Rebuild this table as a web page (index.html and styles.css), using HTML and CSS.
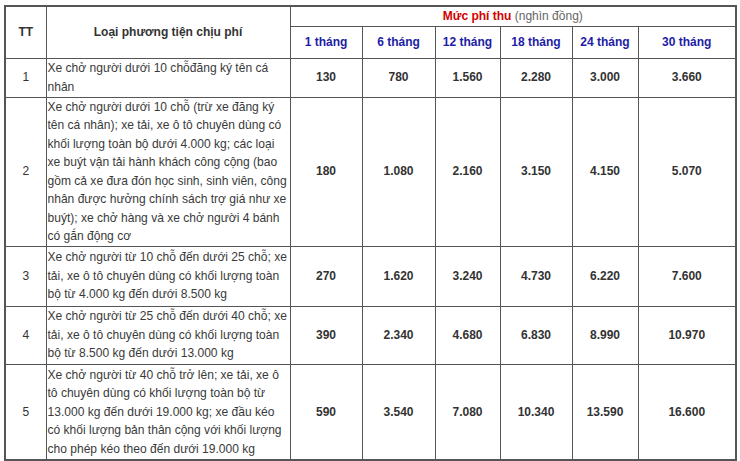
FILE: index.html
```html
<!DOCTYPE html>
<html lang="vi">
<head>
<meta charset="utf-8">
<link rel="stylesheet" href="styles.css">
</head>
<body>
<table class="fee">
  <colgroup>
    <col class="c-tt"><col class="c-name"><col class="c-1"><col class="c-6"><col class="c-12"><col class="c-18"><col class="c-24"><col class="c-30">
  </colgroup>
  <thead>
    <tr class="h1">
      <th rowspan="2" class="hd">TT</th>
      <th rowspan="2" class="hd">Loại phương tiện chịu phí</th>
      <th colspan="6" class="group"><span class="red">Mức phí thu</span> <span class="unit">(nghìn đồng)</span></th>
    </tr>
    <tr class="h2">
      <th class="m">1 tháng</th>
      <th class="m">6 tháng</th>
      <th class="m">12 tháng</th>
      <th class="m">18 tháng</th>
      <th class="m">24 tháng</th>
      <th class="m">30 tháng</th>
    </tr>
  </thead>
  <tbody>
    <tr class="r1">
      <td class="tt">1</td>
      <td class="desc">Xe chở người dưới 10 chỗđăng ký tên cá<br>nhân</td>
      <td class="n">130</td><td class="n">780</td><td class="n">1.560</td><td class="n">2.280</td><td class="n">3.000</td><td class="n">3.660</td>
    </tr>
    <tr class="r2">
      <td class="tt">2</td>
      <td class="desc">Xe chở người dưới 10 chỗ (trừ xe đăng ký<br>tên cá nhân); xe tải, xe ô tô chuyên dùng có<br>khối lượng toàn bộ dưới 4.000 kg; các loại<br>xe buýt vận tải hành khách công cộng (bao<br>gồm cả xe đưa đón học sinh, sinh viên, công<br>nhân được hưởng chính sách trợ giá như xe<br>buýt); xe chở hàng và xe chở người 4 bánh<br>có gắn động cơ</td>
      <td class="n">180</td><td class="n">1.080</td><td class="n">2.160</td><td class="n">3.150</td><td class="n">4.150</td><td class="n">5.070</td>
    </tr>
    <tr class="r3">
      <td class="tt">3</td>
      <td class="desc">Xe chở người từ 10 chỗ đến dưới 25 chỗ; xe<br>tải, xe ô tô chuyên dùng có khối lượng toàn<br>bộ từ 4.000 kg đến dưới 8.500 kg</td>
      <td class="n">270</td><td class="n">1.620</td><td class="n">3.240</td><td class="n">4.730</td><td class="n">6.220</td><td class="n">7.600</td>
    </tr>
    <tr class="r4">
      <td class="tt">4</td>
      <td class="desc">Xe chở người từ 25 chỗ đến dưới 40 chỗ; xe<br>tải, xe ô tô chuyên dùng có khối lượng toàn<br>bộ từ 8.500 kg đến dưới 13.000 kg</td>
      <td class="n">390</td><td class="n">2.340</td><td class="n">4.680</td><td class="n">6.830</td><td class="n">8.990</td><td class="n">10.970</td>
    </tr>
    <tr class="r5">
      <td class="tt">5</td>
      <td class="desc">Xe chở người từ 40 chỗ trở lên; xe tải, xe ô<br>tô chuyên dùng có khối lượng toàn bộ từ<br>13.000 kg đến dưới 19.000 kg; xe đầu kéo<br>có khối lượng bản thân cộng với khối lượng<br>cho phép kéo theo đến dưới 19.000 kg</td>
      <td class="n">590</td><td class="n">3.540</td><td class="n">7.080</td><td class="n">10.340</td><td class="n">13.590</td><td class="n">16.600</td>
    </tr>
  </tbody>
</table>
</body>
</html>
```

FILE: styles.css
```css
html, body {
  margin: 0;
  padding: 0;
  background: #fff;
}

body {
  font-family: "Liberation Sans", Arial, sans-serif;
  font-size: 12px;
  color: #333;
}

.fee {
  border-collapse: collapse;
  table-layout: fixed;
  width: 732px;
  margin: 5px 0 0 4px;
  border: 2px solid #555;
}

.c-tt { width: 41px; }
.c-name { width: 244px; }
.c-1 { width: 72px; }
.c-6 { width: 73px; }
.c-12 { width: 65px; }
.c-18 { width: 72px; }
.c-24 { width: 66px; }
.c-30 { width: 98px; }

.fee th,
.fee td {
  border: 1px solid #555;
  padding: 0;
  vertical-align: middle;
  text-align: center;
  line-height: 18.5px;
  font-size: 12px;
}

.h1 { height: 20px; }
.h2 { height: 32px; }
.r1 { height: 39px; }
.r2 { height: 149px; }
.r3 { height: 60px; }
.r4 { height: 58px; }
.r5 { height: 96px; }

.fee .hd {
  font-weight: bold;
  color: #333;
}

.fee .group {
  font-weight: normal;
}

.red {
  color: #d40000;
  font-weight: bold;
}

.unit {
  color: #666;
}

.fee .m {
  color: #1d1da6;
  font-weight: bold;
}

.fee .tt {
  color: #333;
}

.fee .desc {
  text-align: left;
  padding-left: 1px;
  white-space: nowrap;
  overflow: hidden;
  color: #3a3a3a;
  font-size: 12.05px;
}

.fee .n {
  font-weight: bold;
  color: #333;
}
```
